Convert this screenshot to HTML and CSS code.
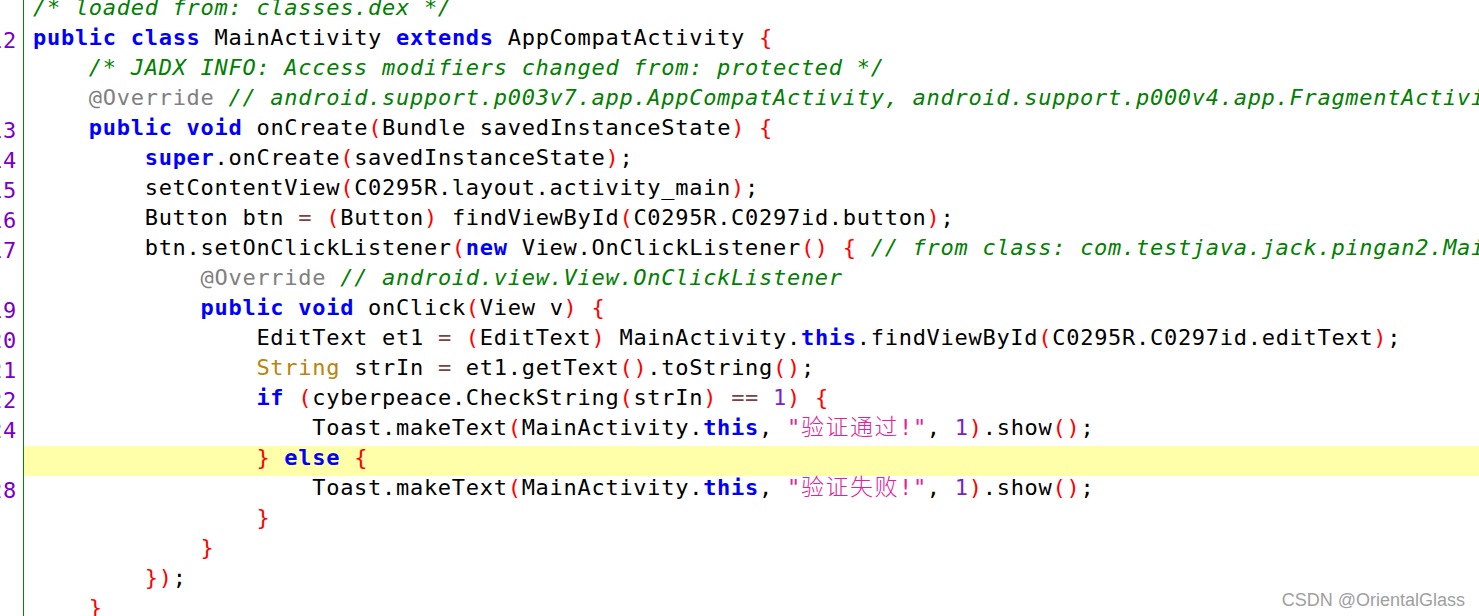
FILE: index.html
```html
<!DOCTYPE html>
<html>
<head>
<meta charset="utf-8">
<link rel="stylesheet" href="styles.css">
</head>
<body>
<div class="editor">
  <div class="line"><span class="num"></span><span class="code"><span class="c">/* loaded from: classes.dex */</span></span></div>
  <div class="line"><span class="num">12</span><span class="code"><span class="k">public</span> <span class="k">class</span> MainActivity <span class="k">extends</span> AppCompatActivity <span class="p">{</span></span></div>
  <div class="line"><span class="num"></span><span class="code">    <span class="c">/* JADX INFO: Access modifiers changed from: protected */</span></span></div>
  <div class="line"><span class="num"></span><span class="code">    <span class="a">@Override</span> <span class="c">// android.support.p003v7.app.AppCompatActivity, android.support.p000v4.app.FragmentActivity</span></span></div>
  <div class="line"><span class="num">13</span><span class="code">    <span class="k">public</span> <span class="k">void</span> onCreate<span class="p">(</span>Bundle savedInstanceState<span class="p">)</span> <span class="p">{</span></span></div>
  <div class="line"><span class="num">14</span><span class="code">        <span class="k">super</span>.onCreate<span class="p">(</span>savedInstanceState<span class="p">)</span>;</span></div>
  <div class="line"><span class="num">15</span><span class="code">        setContentView<span class="p">(</span>C0295R.layout.activity_main<span class="p">)</span>;</span></div>
  <div class="line"><span class="num">16</span><span class="code">        Button btn <span class="o">=</span> <span class="p">(</span>Button<span class="p">)</span> findViewById<span class="p">(</span>C0295R.C0297id.button<span class="p">)</span>;</span></div>
  <div class="line"><span class="num">17</span><span class="code">        btn.setOnClickListener<span class="p">(</span><span class="k">new</span> View.OnClickListener<span class="p">()</span> <span class="p">{</span> <span class="c">// from class: com.testjava.jack.pingan2.MainActivity.1</span></span></div>
  <div class="line"><span class="num"></span><span class="code">            <span class="a">@Override</span> <span class="c">// android.view.View.OnClickListener</span></span></div>
  <div class="line"><span class="num">19</span><span class="code">            <span class="k">public</span> <span class="k">void</span> onClick<span class="p">(</span>View v<span class="p">)</span> <span class="p">{</span></span></div>
  <div class="line"><span class="num">20</span><span class="code">                EditText et1 <span class="o">=</span> <span class="p">(</span>EditText<span class="p">)</span> MainActivity.<span class="k">this</span>.findViewById<span class="p">(</span>C0295R.C0297id.editText<span class="p">)</span>;</span></div>
  <div class="line"><span class="num">21</span><span class="code">                <span class="t">String</span> strIn <span class="o">=</span> et1.getText<span class="p">()</span>.toString<span class="p">()</span>;</span></div>
  <div class="line"><span class="num">22</span><span class="code">                <span class="k">if</span> <span class="p">(</span>cyberpeace.CheckString<span class="p">(</span>strIn<span class="p">)</span> <span class="o">==</span> <span class="n">1</span><span class="p">)</span> <span class="p">{</span></span></div>
  <div class="line"><span class="num">24</span><span class="code">                    Toast.makeText<span class="p">(</span>MainActivity.<span class="k">this</span>, <span class="s">"<span class="cjk">验证通过</span>!"</span>, <span class="n">1</span><span class="p">)</span>.show<span class="p">()</span>;</span></div>
  <div class="line hl"><span class="num"></span><span class="code">                <span class="p">}</span> <span class="k">else</span> <span class="p">{</span></span></div>
  <div class="line"><span class="num">28</span><span class="code">                    Toast.makeText<span class="p">(</span>MainActivity.<span class="k">this</span>, <span class="s">"<span class="cjk">验证失败</span>!"</span>, <span class="n">1</span><span class="p">)</span>.show<span class="p">()</span>;</span></div>
  <div class="line"><span class="num"></span><span class="code">                <span class="p">}</span></span></div>
  <div class="line"><span class="num"></span><span class="code">            <span class="p">}</span></span></div>
  <div class="line"><span class="num"></span><span class="code">        <span class="p">})</span>;</span></div>
  <div class="line"><span class="num"></span><span class="code">    <span class="p">}</span></span></div>
</div>
<div class="watermark">CSDN @OrientalGlass</div>
</body>
</html>
```

FILE: styles.css
```css
html, body {
  margin: 0;
  padding: 0;
  background: #ffffff;
  overflow: hidden;
  width: 1479px;
  height: 616px;
}

body {
  position: relative;
}

.editor {
  display: flex;
  flex-direction: column;
  margin-top: -4px;
  font-family: "DejaVu Sans Mono", monospace;
  font-size: 22px;
  letter-spacing: 0.716px;
  color: #000000;
}

.line {
  display: flex;
  height: 30px;
  line-height: 30px;
  white-space: pre;
}

.num {
  flex: 0 0 24px;
  box-sizing: border-box;
  width: 24px;
  padding-right: 6px;
  text-align: right;
  color: #7a00c8;
  border-right: 1px solid #0e7f0e;
  overflow: hidden;
  direction: rtl;
}

.code {
  flex: 1 1 auto;
  padding-left: 9px;
  position: relative;
  top: -3px;
  overflow: hidden;
  white-space: pre;
}

.hl .code {
  background: #ffffaa;
  top: 0;
}

.hl .code > * {
  position: relative;
  top: -3px;
}

.k { color: #0000ff; font-weight: bold; }
.c { color: #008000; font-style: italic; }
.a { color: #808080; }
.p { color: #ff0000; }
.o { color: #804040; }
.n { color: #7b1fd0; }
.s { color: #e0229e; }
.t { color: #b8860b; }

.cjk {
  font-family: "Noto Sans CJK SC", sans-serif;
  font-size: 23px;
  line-height: 1;
  letter-spacing: 1.5px;
  font-weight: 300;
  vertical-align: baseline;
}

.watermark {
  position: absolute;
  right: 14px;
  bottom: 5px;
  font-family: "Liberation Sans", Arial, sans-serif;
  font-size: 18px;
  color: #a0a0a0;
  text-shadow: 0 0 1px #ffffff;
}
```
